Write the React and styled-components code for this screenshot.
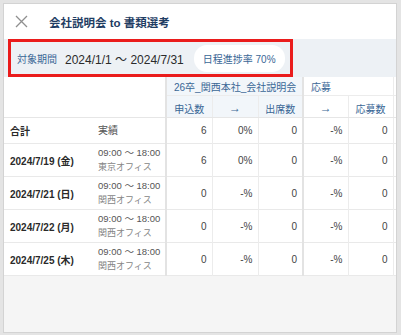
import React from 'react';
import styled, { createGlobalStyle } from 'styled-components';

const GlobalStyle = createGlobalStyle`
  body {
    margin: 0;
    background: #e4e4e4;
    font-family: "Liberation Sans", "Noto Sans CJK JP", sans-serif;
  }
`;

const StyledWindow = styled.div`
  display: flex;
  flex-direction: column;
  margin: 3px 4px 0 3px;
  height: 328px;
  border: 1px solid #d3d3d3;
  background: #f5f5f5;
  overflow: hidden;
`;

const StyledHeader = styled.header`
  display: flex;
  align-items: center;
  gap: 21px;
  height: 35px;
  padding-left: 11px;
  background: #fff;
`;

const StyledClose = styled.button`
  display: flex;
  padding: 0;
  border: none;
  background: none;
  color: #8f8f8f;
`;

const StyledTitle = styled.h1`
  margin: 0;
  font-size: 11.5px;
  font-weight: 700;
  color: #1f3d63;
`;

const StyledFilterBar = styled.div`
  display: flex;
  padding-left: 4px;
  background: #edf1f5;
`;

const StyledHighlight = styled.div`
  display: flex;
  align-items: center;
  gap: 8px;
  width: 273px;
  height: 32px;
  padding-left: 6px;
  border: 3px solid #ea1c1c;
`;

const StyledLabel = styled.span`
  font-size: 10px;
  color: #3a6796;
`;

const StyledRange = styled.span`
  font-size: 12px;
  color: #2b2b2b;
`;

const StyledPill = styled.span`
  margin-left: 2px;
  padding: 6px 9px;
  border-radius: 13px;
  background: #fff;
  font-size: 10px;
  color: #3a6796;
`;

const StyledTable = styled.table`
  width: 392px;
  table-layout: fixed;
  border-collapse: collapse;
  background: #fff;
  font-size: 10px;
  color: #333;
`;

const StyledCol = styled.col`
  width: ${({ w }) => w}px;
`;

const StyledGroupHead = styled.th`
  height: 18px;
  padding: 0 0 0 7px;
  text-align: left;
  font-weight: 400;
  color: #3a6796;
  background: ${({ tint }) => (tint ? '#f2f6fa' : '#fff')};
  border-left: ${({ sep }) => (sep ? '2px solid #e3e3e3' : '1px solid #ececec')};
  border-bottom: 1px solid #ececec;
  white-space: nowrap;
  overflow: hidden;
`;

const StyledSubHead = styled.th`
  height: 18px;
  padding: 3px 0 0;
  text-align: center;
  font-weight: 400;
  font-size: ${({ arrow }) => (arrow ? '12px' : '10px')};
  color: #3a6796;
  background: ${({ tint }) => (tint ? '#f2f6fa' : '#fff')};
  border-left: ${({ sep }) => (sep ? '2px solid #e3e3e3' : '1px solid #ececec')};
  border-bottom: 1px solid #e6e6e6;
`;

const StyledCorner = styled.th`
  border-bottom: 1px solid #e6e6e6;
`;

const StyledRow = styled.tr`
  height: ${({ total }) => (total ? 26 : 33)}px;
  border-bottom: 1px solid #e9e9e9;
`;

const StyledDate = styled.td`
  padding: 0 0 0 6px;
  font-weight: 700;
  color: #2a2a2a;
  white-space: nowrap;
`;

const StyledTime = styled.td`
  padding: 0 0 0 5px;
  line-height: 14px;
  font-size: ${({ total }) => (total ? '10px' : '9.5px')};
  color: #555;
  white-space: nowrap;
`;

const StyledPlace = styled.div`
  font-size: 9px;
  color: #858585;
`;

const StyledNum = styled.td`
  padding: 0 5px 0 0;
  text-align: right;
  color: #444;
  border-left: ${({ sep }) => (sep ? '2px solid #e3e3e3' : '1px solid #ececec')};
`;

const CloseIcon = () => (
  <svg width="13" height="13" viewBox="0 0 13 13" fill="none" stroke="currentColor" strokeWidth="1.3">
    <path d="M1 1L12 12M12 1L1 12" />
  </svg>
);

const rows = [
  { date: '2024/7/19 (金)', place: '東京オフィス', values: ['6', '0%', '0', '-%', '0'] },
  { date: '2024/7/21 (日)', place: '関西オフィス', values: ['0', '-%', '0', '-%', '0'] },
  { date: '2024/7/22 (月)', place: '関西オフィス', values: ['0', '-%', '0', '-%', '0'] },
  { date: '2024/7/25 (木)', place: '関西オフィス', values: ['0', '-%', '0', '-%', '0'] },
];

const Values = ({ values }) => (
  <>
    {values.map((v, i) => (
      <StyledNum key={i} sep={i === 0 || i === 3}>
        {v}
      </StyledNum>
    ))}
    <StyledNum />
  </>
);

const App = () => (
  <>
    <GlobalStyle />
    <StyledWindow>
      <StyledHeader>
        <StyledClose>
          <CloseIcon />
        </StyledClose>
        <StyledTitle>会社説明会 to 書類選考</StyledTitle>
      </StyledHeader>
      <StyledFilterBar>
        <StyledHighlight>
          <StyledLabel>対象期間</StyledLabel>
          <StyledRange>2024/1/1 ～ 2024/7/31</StyledRange>
          <StyledPill>日程進捗率 70%</StyledPill>
        </StyledHighlight>
      </StyledFilterBar>
      <StyledTable>
        <colgroup>
          <StyledCol w={89} />
          <StyledCol w={73} />
          <StyledCol w={46} />
          <StyledCol w={46} />
          <StyledCol w={45} />
          <StyledCol w={45} />
          <StyledCol w={45} />
          <StyledCol w={3} />
        </colgroup>
        <thead>
          <tr>
            <StyledCorner colSpan={2} rowSpan={2} />
            <StyledGroupHead colSpan={3} tint sep>
              26卒_関西本社_会社説明会
            </StyledGroupHead>
            <StyledGroupHead colSpan={2} sep>
              応募
            </StyledGroupHead>
            <StyledGroupHead />
          </tr>
          <tr>
            <StyledSubHead tint sep>申込数</StyledSubHead>
            <StyledSubHead tint arrow>→</StyledSubHead>
            <StyledSubHead tint>出席数</StyledSubHead>
            <StyledSubHead sep arrow>→</StyledSubHead>
            <StyledSubHead>応募数</StyledSubHead>
            <StyledSubHead />
          </tr>
        </thead>
        <tbody>
          <StyledRow total>
            <StyledDate>合計</StyledDate>
            <StyledTime total>実績</StyledTime>
            <Values values={['6', '0%', '0', '-%', '0']} />
          </StyledRow>
          {rows.map((r) => (
            <StyledRow key={r.date}>
              <StyledDate>{r.date}</StyledDate>
              <StyledTime>
                09:00 ～ 18:00
                <StyledPlace>{r.place}</StyledPlace>
              </StyledTime>
              <Values values={r.values} />
            </StyledRow>
          ))}
        </tbody>
      </StyledTable>
    </StyledWindow>
  </>
);

export default App;
